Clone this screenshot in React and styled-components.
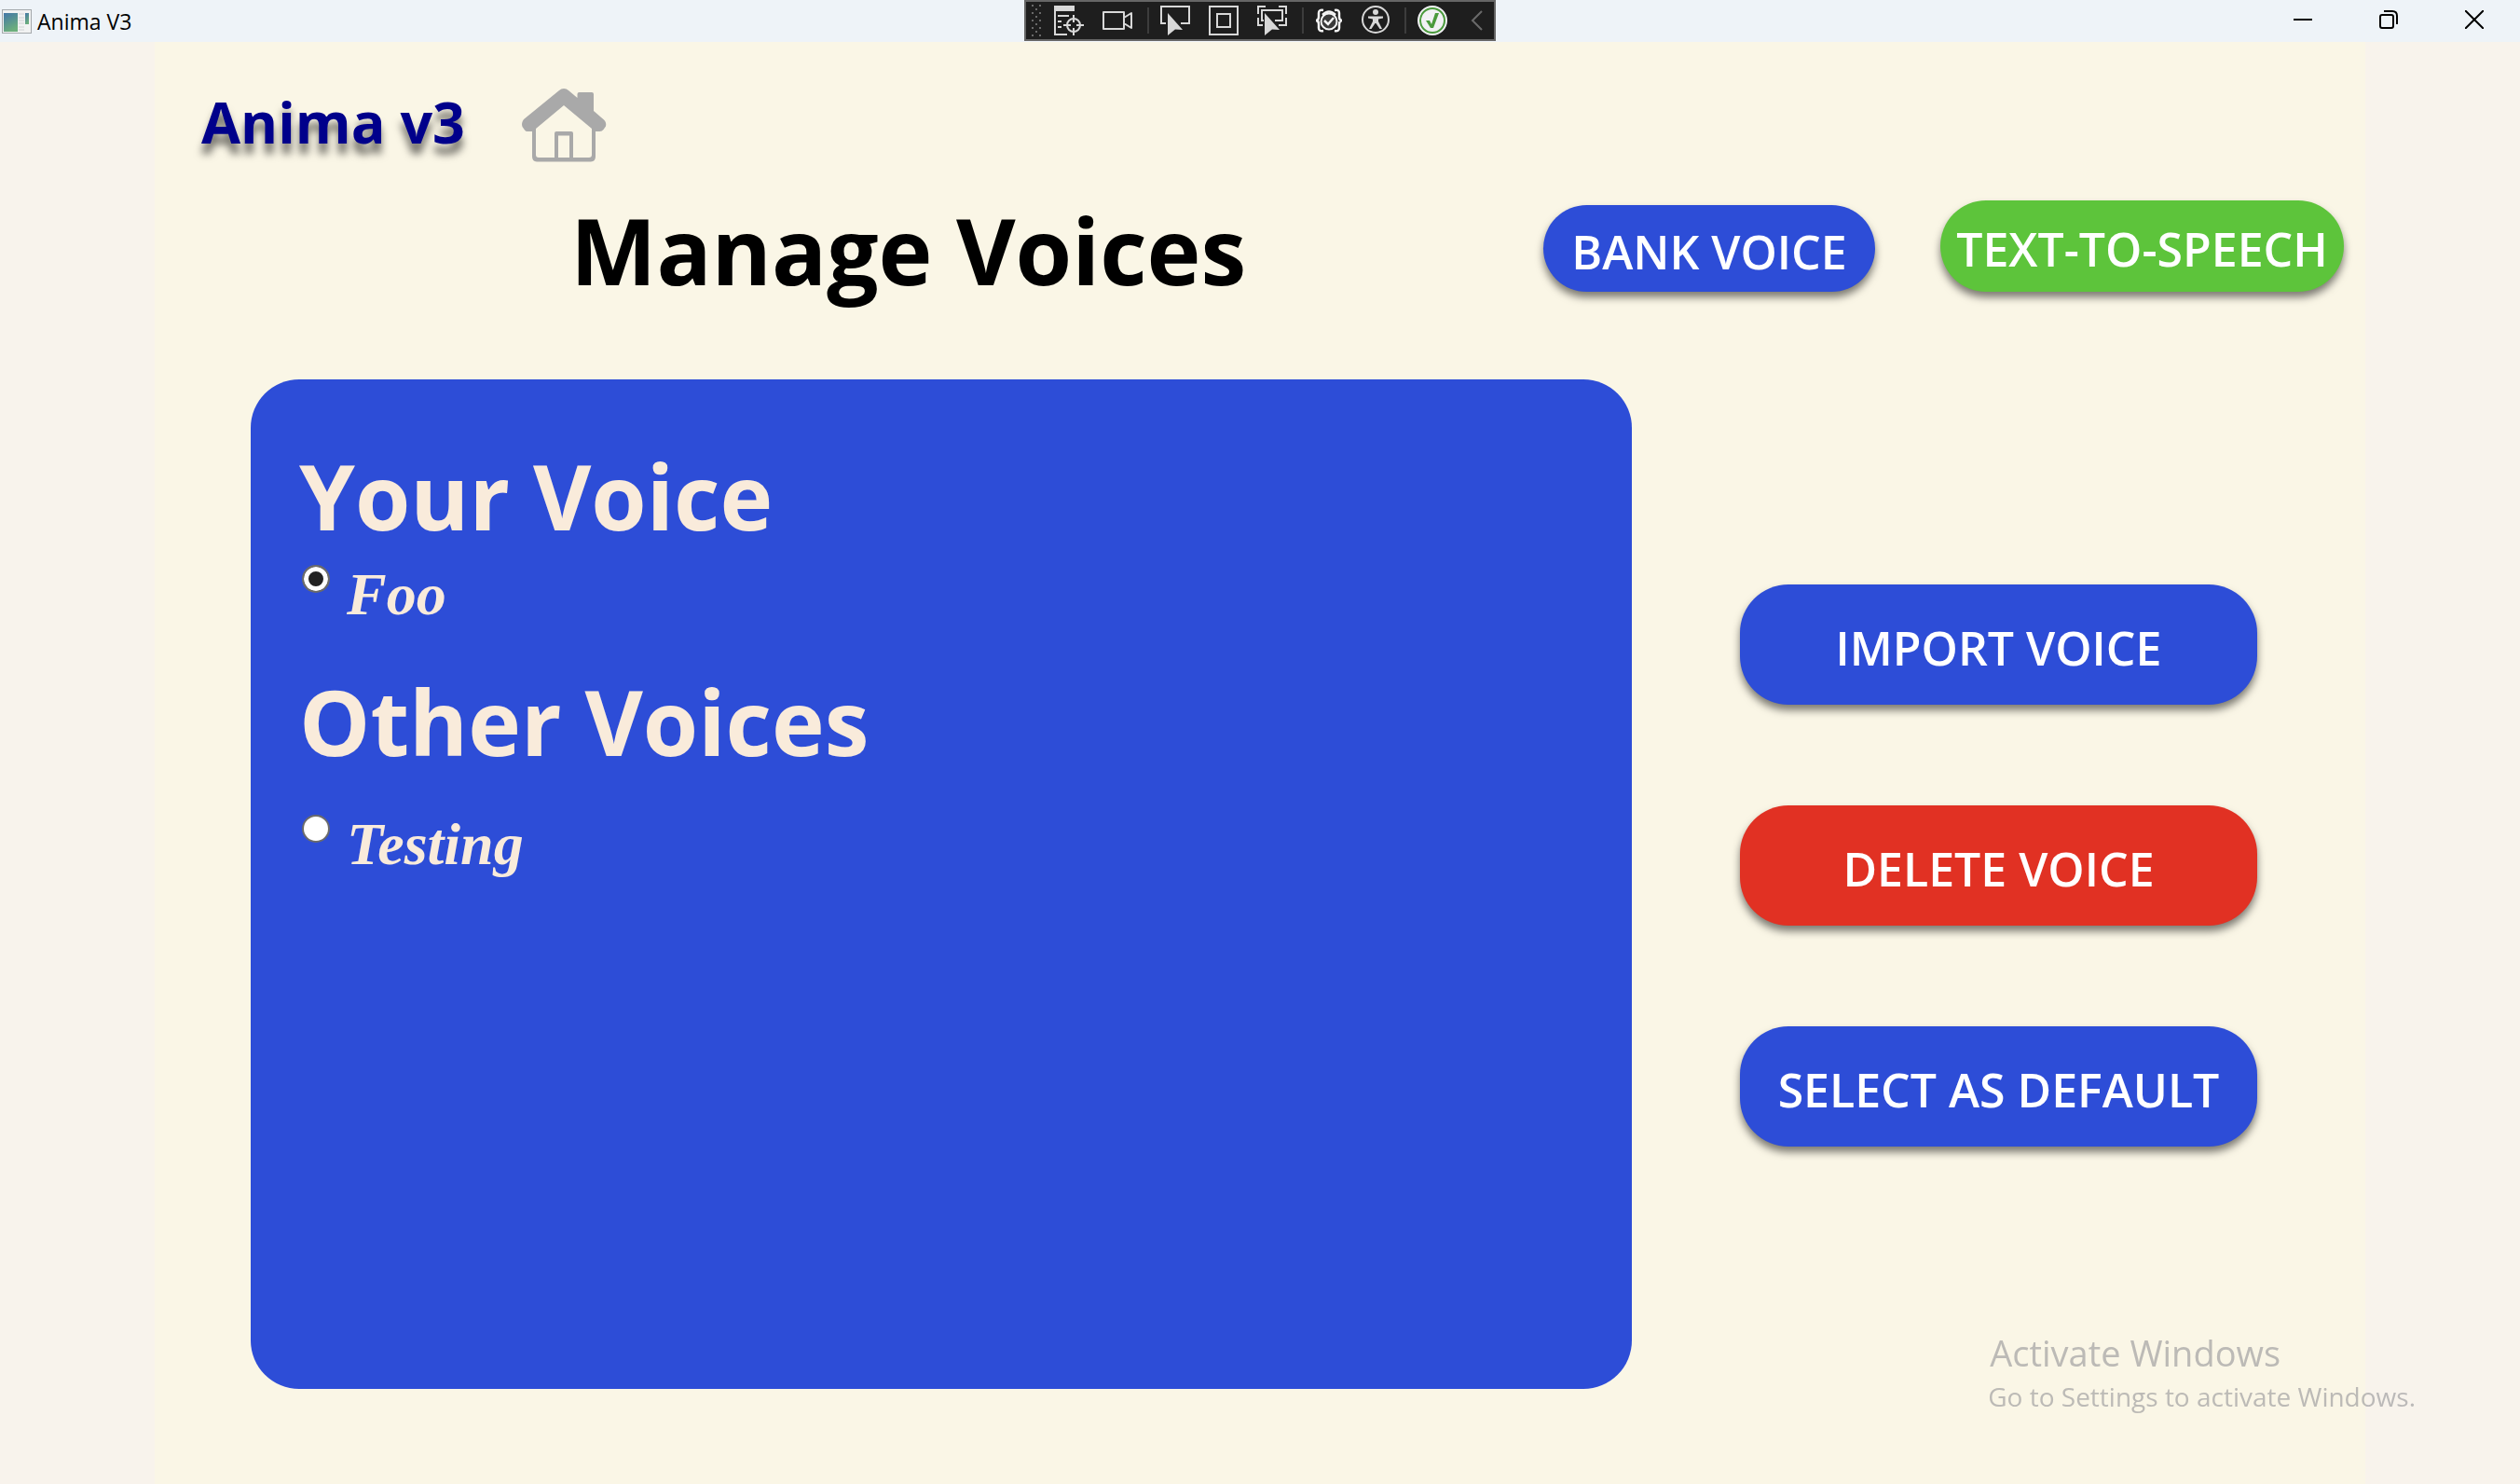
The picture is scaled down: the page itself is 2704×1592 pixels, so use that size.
import React, { useState } from "react";
import styled, { createGlobalStyle } from "styled-components";

const GlobalStyle = createGlobalStyle`
  *, *::before, *::after { box-sizing: border-box; }
  body {
    margin: 0;
    background: #f8f3ec;
    font-family: "Open Sans", "Noto Sans", sans-serif;
  }
  button { font-family: inherit; border: 0; padding: 0; cursor: pointer; }
  h1, h2 { margin: 0; font-weight: 700; }
`;

const Window = styled.div`
  display: flex;
  flex-direction: column;
  min-height: 100vh;
`;

const TitleBar = styled.header`
  display: grid;
  grid-template-columns: 1fr auto 1fr;
  height: 45px;
  background: #eef3f8;
`;

const AppName = styled.div`
  display: flex;
  align-items: center;
  gap: 6px;
  padding: 0 0 0 2px;
  font-size: 23px;
  line-height: 44px;
  color: #000;
`;

const WindowControls = styled.div`
  display: flex;
  justify-content: flex-end;
  padding-right: 3px;
`;

const ControlButton = styled.button`
  display: grid;
  place-items: center;
  width: 92px;
  height: 42px;
  background: transparent;
`;

const DebugBar = styled.div`
  display: flex;
  align-items: center;
  height: 44px;
  padding: 0 10px 0 6px;
  border: 2px solid #666;
  background: #1e1e1e;
`;

const ToolGroup = styled.div`
  display: flex;
  align-items: center;
  gap: 20px;
`;

const ToolButton = styled.button`
  display: block;
  width: ${(p) => p.$size || 32}px;
  height: 32px;
  background: transparent;
  svg { display: block; }
`;

const Separator = styled.span`
  width: 2px;
  height: 28px;
  margin: 0 12px 0 16px;
  background: #3c3c3c;
`;

const Grip = styled.svg`
  margin-right: 14px;
`;

const Page = styled.main`
  flex: 1;
  display: flex;
  flex-direction: column;
  margin: 0 166px;
  padding-bottom: 102px;
  background: #faf6e6;
`;

const BrandRow = styled.div`
  display: flex;
  align-items: flex-start;
  gap: 60px;
  padding: 45px 50px 30px;
`;

const Brand = styled.div`
  font-size: 61px;
  line-height: 82px;
  font-weight: 700;
  color: #00008b;
  text-shadow: 0 11px 8px rgba(0, 0, 0, 0.55);
`;

const HomeLink = styled.a`
  display: block;
  svg { display: block; }
`;

const HeadingRow = styled.div`
  display: flex;
  justify-content: space-between;
  padding: 0 23px 0 446px;
`;

const Title = styled.h1`
  font-size: 98px;
  line-height: 120px;
  color: #000;
`;

const Nav = styled.nav`
  display: flex;
  align-items: flex-end;
  gap: 70px;
  padding-bottom: 15px;
`;

const tones = { blue: "#2d4dd7", red: "#e13123", green: "#5dc43b" };

const PillButton = styled.button`
  width: ${(p) => p.$width}px;
  height: ${(p) => p.$height}px;
  padding-top: 6px;
  border-radius: 52px;
  background: ${(p) => tones[p.$tone]};
  color: #fff;
  font-size: 50px;
  line-height: 64px;
  font-weight: 600;
  white-space: nowrap;
  box-shadow: 0 6px 8px rgba(0, 0, 0, 0.5);
`;

const Content = styled.div`
  flex: 1;
  display: flex;
  gap: 116px;
  margin-top: 79px;
  padding: 0 116px 0 103px;
`;

const VoicePanel = styled.section`
  flex: 1;
  padding: 65px 52px;
  border-radius: 52px;
  background: #2d4dd7;
  color: #f9ebdb;
`;

const VoiceGroup = styled.section`
  & + & { margin-top: 35px; }
`;

const GroupTitle = styled.h2`
  margin-bottom: ${(p) => p.$gap}px;
  font-size: 96px;
  line-height: 120px;
`;

const VoiceOption = styled.label`
  display: flex;
  align-items: flex-start;
  gap: 18px;
  padding-left: 3px;
  font: italic 700 64px/82px "Liberation Serif", "Times New Roman", serif;
`;

const Radio = styled.input`
  appearance: none;
  width: 30px;
  height: 30px;
  margin: 9px 0 0;
  border: 2px solid #6b6b6b;
  border-radius: 50%;
  background: #fff;
  &:checked {
    background: #222;
    box-shadow: inset 0 0 0 5px #fff;
  }
`;

const Actions = styled.div`
  display: flex;
  flex-direction: column;
  gap: 108px;
  padding-top: 220px;
`;

const Watermark = styled.aside`
  position: fixed;
  right: 112px;
  bottom: 74px;
  color: rgba(136, 136, 142, 0.55);
  pointer-events: none;
`;

const WatermarkTitle = styled.div`
  margin-bottom: 3px;
  padding-left: 2px;
  font-size: 38px;
  line-height: 48px;
`;

const WatermarkText = styled.div`
  font-size: 28px;
  line-height: 40px;
`;

const AppIcon = () => (
  <svg width="32" height="26" viewBox="0 0 32 26" aria-hidden="true">
    <defs>
      <linearGradient id="pane" x1="0" y1="0" x2="0.4" y2="1">
        <stop offset="0" stopColor="#4377a8" />
        <stop offset="1" stopColor="#6cae7c" />
      </linearGradient>
    </defs>
    <rect x="0.5" y="0.5" width="31" height="25" fill="#f1f2f2" stroke="#a5a9ac" />
    <rect x="2" y="4" width="15" height="20" fill="url(#pane)" />
    <path d="M18 5h6M18 9h6M18 12h6M18 15h6M18 19h6M18 22h6" stroke="#d0d2d4" />
    <rect x="25" y="4" width="4" height="12" fill="url(#pane)" />
  </svg>
);

const HomeIcon = () => (
  <svg width="92" height="88" viewBox="559 90 92 88" aria-hidden="true">
    <path
      fill="#a9a9a9"
      d="M605 95q3 0 5 2l9.500 8V101q0-2 2-2H635q2 0 2 2V119l11 9.500q3 3 2 7L647.500 139q-1.500 2-4 2H639V168q0 5-5 5.500H576q-5-.5-5-5.500V141H566q-2 0-3-1.500L560.500 136q-1.500-4 1.500-8L600 97q2-2 5-2ZM605 113 575 138V166q0 3 3 3H595V143q0-2 2-2H613q2 0 2 2V169H632q3 0 3-3V138ZM599 145.500V169H611V145.500Z"
      fillRule="evenodd"
    />
  </svg>
);

const line = { fill: "none", stroke: "#d8d8d8", strokeWidth: 2 };

const TreeIcon = () => (
  <svg width="32" height="32" viewBox="0 0 32 32" aria-hidden="true">
    <path d="M0 0H22V6H0Z" fill="#d8d8d8" />
    <path d="M1 2V31H14M4 11H16M4 17H8M4 23H8" {...line} />
    <circle cx="21" cy="21" r="7" {...line} />
    <path d="M21 10V18M21 24V32M10 21H18M24 21H32" {...line} />
  </svg>
);
const CameraIcon = () => (
  <svg width="32" height="32" viewBox="0 0 32 32" aria-hidden="true">
    <path d="M1 7H23V25H1ZM23 13 31 8V24L23 19" {...line} strokeLinejoin="round" />
  </svg>
);
const Cursor = () => <path d="M8 8 24 26 16 25.500 8 32Z" fill="#d8d8d8" />;
const SelectIcon = () => (
  <svg width="32" height="32" viewBox="0 0 32 32" aria-hidden="true">
    <path d="M6 19H1V1H31V19H22" {...line} />
    <Cursor />
  </svg>
);
const AdornerIcon = () => (
  <svg width="32" height="32" viewBox="0 0 32 32" aria-hidden="true">
    <path d="M1 1H31V31H1ZM9 9H23V23H9Z" {...line} />
  </svg>
);
const TrackIcon = () => (
  <svg width="32" height="32" viewBox="0 0 32 32" aria-hidden="true">
    <path d="M1 9V1H9M23 1H31V9M31 13V21H23M6 21H1V13M7 16H5V5H27V16H19" {...line} />
    <Cursor />
  </svg>
);
const ReloadIcon = () => (
  <svg width="30" height="32" viewBox="0 0 30 32" aria-hidden="true">
    <path
      d="M9 5Q4 4 4 8V12Q4 16 1 16Q4 16 4 20V24Q4 28 9 27M21 5Q26 4 26 8V12Q26 16 29 16Q26 16 26 20V24Q26 28 21 27"
      fill="none"
      stroke="#f4f4f4"
      strokeWidth="2.5"
    />
    <circle cx="15" cy="17" r="8.500" fill="#3a3a3a" stroke="#f4f4f4" strokeWidth="2" />
    <path d="M10 16 14 20 20 13M8 10Q15 3 22 10" fill="none" stroke="#f4f4f4" strokeWidth="2.500" />
  </svg>
);
const AccessibilityIcon = () => (
  <svg width="30" height="32" viewBox="0 0 30 32" aria-hidden="true">
    <circle cx="15" cy="15" r="14" {...line} />
    <circle cx="15" cy="7" r="3" fill="#d8d8d8" />
    <path d="M7 11.500H23V13.500L18 14.500V17L22 25H19.500L15.500 19H14.500L10.500 25H8L12 17V14.500L7 13.500Z" fill="#d8d8d8" />
  </svg>
);
const CheckIcon = () => (
  <svg width="32" height="32" viewBox="0 0 32 32" aria-hidden="true">
    <circle cx="16" cy="16" r="16" fill="#f1f1f4" />
    <circle cx="16" cy="16" r="13" fill="none" stroke="#4a9a3c" strokeWidth="2" />
    <path d="M9 16H13L15 20 19 8H23L17 24H14Z" fill="#4a9a3c" />
  </svg>
);

const gripDots = [];
for (let row = 0; row < 9; row += 1) {
  if (row % 2 === 0) gripDots.push([0, row * 4], [8, row * 4]);
  else gripDots.push([4, row * 4]);
}

const DebugToolbar = () => (
  <DebugBar role="toolbar" aria-label="XAML debugging tools">
    <Grip width="10" height="34" viewBox="0 0 10 34" aria-hidden="true">
      {gripDots.map(([x, y]) => (
        <rect key={`${x}-${y}`} x={x} y={y} width="2" height="2" fill="#6a6a6a" />
      ))}
    </Grip>
    <ToolGroup>
      <ToolButton aria-label="Go to Live Visual Tree"><TreeIcon /></ToolButton>
      <ToolButton aria-label="Record"><CameraIcon /></ToolButton>
    </ToolGroup>
    <Separator />
    <ToolGroup>
      <ToolButton aria-label="Select element"><SelectIcon /></ToolButton>
      <ToolButton aria-label="Display layout adorners"><AdornerIcon /></ToolButton>
      <ToolButton aria-label="Track focused element"><TrackIcon /></ToolButton>
    </ToolGroup>
    <Separator />
    <ToolGroup>
      <ToolButton $size={30} aria-label="Binding failures"><ReloadIcon /></ToolButton>
      <ToolButton $size={30} aria-label="Scan for accessibility"><AccessibilityIcon /></ToolButton>
    </ToolGroup>
    <Separator />
    <ToolGroup>
      <ToolButton aria-label="Hot Reload"><CheckIcon /></ToolButton>
      <ToolButton $size={20} aria-label="Collapse toolbar">
        <svg width="20" height="32" viewBox="0 0 20 32" aria-hidden="true">
          <path d="M17 6 7 16 17 26" fill="none" stroke="#6a6a6a" strokeWidth="2" />
        </svg>
      </ToolButton>
    </ToolGroup>
  </DebugBar>
);

const stroke = { fill: "none", stroke: "#000", strokeWidth: 2 };

export default function App() {
  const [voice, setVoice] = useState("Foo");
  const option = (name) => (
    <VoiceOption>
      <Radio type="radio" name="voice" checked={voice === name} onChange={() => setVoice(name)} />
      {name}
    </VoiceOption>
  );

  return (
    <Window>
      <GlobalStyle />
      <TitleBar>
        <AppName><AppIcon />Anima V3</AppName>
        <DebugToolbar />
        <WindowControls>
          <ControlButton aria-label="Minimize">
            <svg width="20" height="20" viewBox="0 0 20 20"><path d="M0 10H20" {...stroke} /></svg>
          </ControlButton>
          <ControlButton aria-label="Restore">
            <svg width="20" height="20" viewBox="0 0 20 20">
              <rect x="1" y="5" width="14" height="14" rx="2" {...stroke} />
              <path d="M5 1H14Q19 1 19 6V15" {...stroke} />
            </svg>
          </ControlButton>
          <ControlButton aria-label="Close">
            <svg width="20" height="20" viewBox="0 0 20 20"><path d="M0 0 20 20M20 0 0 20" {...stroke} /></svg>
          </ControlButton>
        </WindowControls>
      </TitleBar>

      <Page>
        <BrandRow>
          <Brand>Anima v3</Brand>
          <HomeLink href="#home" aria-label="Home"><HomeIcon /></HomeLink>
        </BrandRow>
        <HeadingRow>
          <Title>Manage Voices</Title>
          <Nav>
            <PillButton $tone="blue" $width={356} $height={93}>BANK VOICE</PillButton>
            <PillButton $tone="green" $width={433} $height={98}>TEXT-TO-SPEECH</PillButton>
          </Nav>
        </HeadingRow>
        <Content>
          <VoicePanel>
            <VoiceGroup>
              <GroupTitle $gap={5}>Your Voice</GroupTitle>
              {option("Foo")}
            </VoiceGroup>
            <VoiceGroup>
              <GroupTitle $gap={31}>Other Voices</GroupTitle>
              {option("Testing")}
            </VoiceGroup>
          </VoicePanel>
          <Actions>
            <PillButton $tone="blue" $width={555} $height={129}>IMPORT VOICE</PillButton>
            <PillButton $tone="red" $width={555} $height={129}>DELETE VOICE</PillButton>
            <PillButton $tone="blue" $width={555} $height={129}>SELECT AS DEFAULT</PillButton>
          </Actions>
        </Content>
      </Page>

      <Watermark>
        <WatermarkTitle>Activate Windows</WatermarkTitle>
        <WatermarkText>Go to Settings to activate Windows.</WatermarkText>
      </Watermark>
    </Window>
  );
}
